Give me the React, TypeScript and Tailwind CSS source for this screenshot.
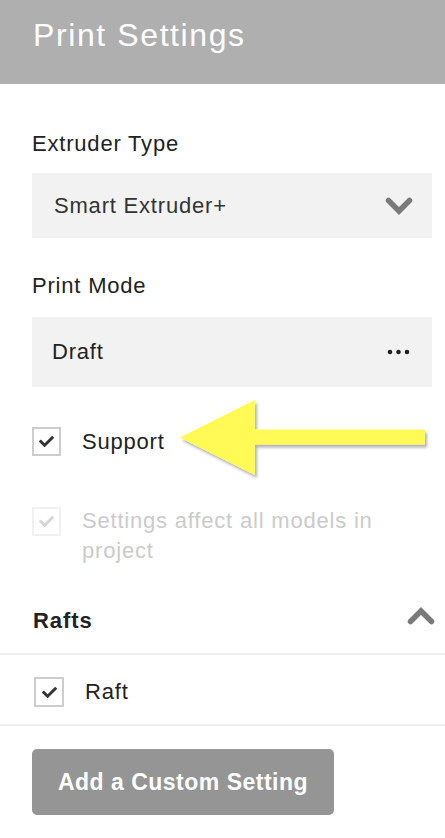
import React from "react";

const Check = ({ color = "#333333" }: { color?: string }) => (
  <svg width="17" height="15" viewBox="0 0 512 512" className="block">
    <path
      fill={color}
      d="M173.898 439.404l-166.4-166.4c-9.997-9.997-9.997-26.206 0-36.204l36.203-36.204c9.997-9.998 26.207-9.998 36.204 0L192 312.69 432.095 72.596c9.997-9.997 26.207-9.997 36.204 0l36.203 36.204c9.997 9.997 9.997 26.206 0 36.204l-294.4 294.401c-9.998 9.997-26.207 9.997-36.204-.001z"
    />
  </svg>
);

const Checkbox = ({ disabled = false, size = 29 }: { disabled?: boolean; size?: number }) => (
  <div
    className={
      "shrink-0 flex items-center justify-center border-2 " +
      (disabled ? "border-[#f0f0f0]" : "border-[#cdcdcd]")
    }
    style={{ width: size, height: size }}
  >
    <Check color={disabled ? "#d6d6d6" : "#333333"} />
  </div>
);

const Chevron = ({ up = false }: { up?: boolean }) => (
  <svg width="28" height="18" viewBox="0 0 28 18" className="block">
    <polyline
      points={up ? "3.5,14.5 14,4 24.5,14.5" : "3.5,3.5 14,14 24.5,3.5"}
      fill="none"
      stroke="#7a7a7a"
      strokeWidth="5.5"
      strokeLinecap="round"
      strokeLinejoin="miter"
    />
  </svg>
);

const Dots = () => (
  <svg width="24" height="6" viewBox="0 0 24 6" className="block">
    <circle cx="3" cy="3" r="2.3" fill="#222" />
    <circle cx="11.5" cy="3" r="2.3" fill="#222" />
    <circle cx="20" cy="3" r="2.3" fill="#222" />
  </svg>
);

export default function App() {
  return (
    <div className="relative w-[445px] h-[838px] overflow-hidden bg-white font-['Liberation_Sans',Arial,sans-serif]">
      {/* header */}
      <div className="h-[84px] bg-[#afafaf] pl-[33px] pt-[19px]">
        <h1 className="text-[32px] leading-none tracking-[1.6px] text-white font-normal">
          Print Settings
        </h1>
      </div>

      <div className="pl-[32px] pr-[13px]">
        <div className="mt-[47px] text-[22px] leading-[26px] tracking-[0.8px] text-[#222]">
          Extruder Type
        </div>
        <div className="mt-[16px] h-[65px] bg-[#f2f2f2] flex items-center justify-between pl-[22px] pr-[19px]">
          <span className="text-[22px] leading-[26px] tracking-[0.8px] text-[#333]">
            Smart Extruder+
          </span>
          <Chevron />
        </div>

        <div className="mt-[35px] text-[22px] leading-[26px] tracking-[0.8px] text-[#222]">
          Print Mode
        </div>
        <div className="mt-[18px] h-[70px] bg-[#f2f2f2] flex items-center justify-between pl-[20px] pr-[21px]">
          <span className="text-[22px] leading-[26px] tracking-[0.8px] text-[#222]">Draft</span>
          <Dots />
        </div>

        <div className="mt-[40px] flex items-center gap-[21px]">
          <Checkbox />
          <span className="text-[22px] leading-[26px] tracking-[0.8px] text-[#222]">Support</span>
        </div>

        <div className="mt-[50px] pr-[19px] flex items-start gap-[21px]">
          <div className="mt-[1px]">
            <Checkbox disabled />
          </div>
          <span className="text-[22px] leading-[30px] tracking-[0.8px] text-[#cbcbcb]">
            Settings affect all models in project
          </span>
        </div>
      </div>

      {/* rafts */}
      <div className="mt-[42px] pl-[33px] pr-[10px] pb-[19px] flex items-start justify-between border-b-2 border-[#eeeeee]">
        <span className="text-[22px] leading-[26px] tracking-[0.9px] font-bold text-[#222]">Rafts</span>
        <div className="-mt-[1px]">
          <Chevron up />
        </div>
      </div>
      <div className="pl-[34px] pt-[22px] pb-[17px] flex items-center gap-[21px] border-b-2 border-[#eeeeee]">
        <Checkbox size={30} />
        <span className="text-[22px] leading-[26px] tracking-[0.8px] text-[#222]">Raft</span>
      </div>

      <div className="pl-[32px] mt-[23px]">
        <button className="w-[302px] h-[66px] rounded-[5px] bg-[#959595] text-white font-bold text-[23px] tracking-[0.5px]">
          Add a Custom Setting
        </button>
      </div>

      {/* annotation arrow */}
      <svg
        className="absolute left-[176px] top-[396px]"
        width="262"
        height="92"
        viewBox="0 0 262 92"
      >
        <defs>
          <filter id="sh" x="-10%" y="-20%" width="130%" height="150%">
            <feDropShadow dx="2" dy="3" stdDeviation="1.6" floodColor="#000" floodOpacity="0.3" />
          </filter>
        </defs>
        <polygon
          points="4,41.5 79,4 79,33.5 249,33.5 249,48.5 79,48.5 79,79"
          fill="#fffa55"
          filter="url(#sh)"
        />
      </svg>
    </div>
  );
}
